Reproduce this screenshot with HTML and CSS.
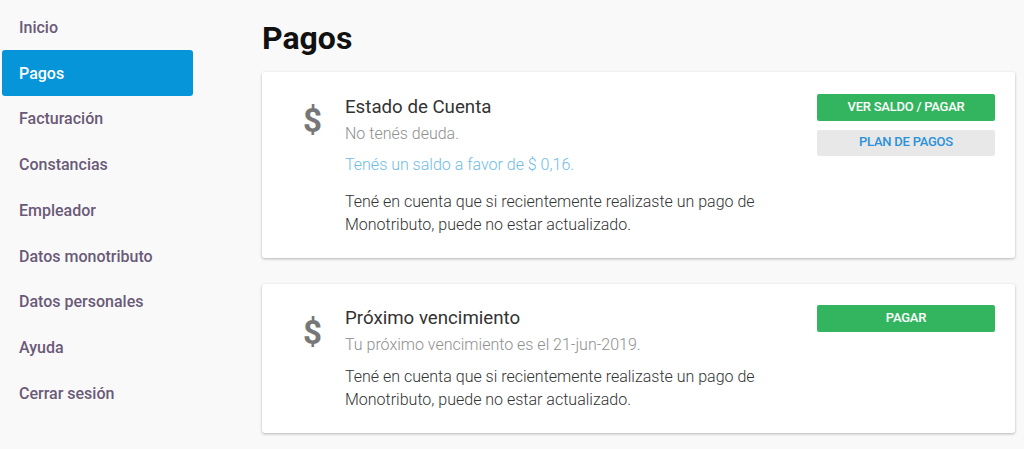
FILE: index.html
```html
<!DOCTYPE html>
<html lang="es">
<head>
<meta charset="utf-8">
<title>Pagos</title>
<link rel="stylesheet" href="styles.css">
</head>
<body>
<div class="layout">
  <nav class="sidebar">
    <a class="nav-item">Inicio</a>
    <a class="nav-item active">Pagos</a>
    <a class="nav-item">Facturación</a>
    <a class="nav-item">Constancias</a>
    <a class="nav-item">Empleador</a>
    <a class="nav-item">Datos monotributo</a>
    <a class="nav-item">Datos personales</a>
    <a class="nav-item">Ayuda</a>
    <a class="nav-item">Cerrar sesión</a>
  </nav>
  <main class="main">
    <h1 class="page-title">Pagos</h1>
    <section class="card card-first">
      <div class="icon">$</div>
      <div class="body">
        <h2 class="card-title">Estado de Cuenta</h2>
        <p class="muted">No tenés deuda.</p>
        <p class="credit">Tenés un saldo a favor de $ 0,16.</p>
        <p class="note note-first">Tené en cuenta que si recientemente realizaste un pago de Monotributo, puede no estar actualizado.</p>
      </div>
      <div class="actions actions-first">
        <a class="btn btn-green">VER SALDO / PAGAR</a>
        <a class="btn btn-grey">PLAN DE PAGOS</a>
      </div>
    </section>
    <section class="card">
      <div class="icon">$</div>
      <div class="body">
        <h2 class="card-title">Próximo vencimiento</h2>
        <p class="muted">Tu próximo vencimiento es el 21-jun-2019.</p>
        <p class="note note-second">Tené en cuenta que si recientemente realizaste un pago de Monotributo, puede no estar actualizado.</p>
      </div>
      <div class="actions">
        <a class="btn btn-green">PAGAR</a>
      </div>
    </section>
  </main>
</div>
</body>
</html>
```

FILE: styles.css
```css
* { box-sizing: border-box; }
html, body { margin: 0; height: 100%; overflow: hidden; }
body {
  background: #f9f9f9;
  font-family: Roboto, "Liberation Sans", sans-serif;
  color: #333;
}
.layout { display: flex; align-items: flex-start; }
.sidebar {
  width: 191px;
  margin-left: 2px;
  padding-top: 4.5px;
  flex: none;
  display: flex;
  flex-direction: column;
}
.nav-item {
  height: 45.75px;
  padding-left: 17px;
  display: flex;
  align-items: center;
  border-radius: 3px;
  font-size: 16px;
  font-weight: 500;
  color: #6a5a78;
}
.nav-item.active { background: #0795d9; color: #fff; }
.main { width: 753px; margin-left: 69px; }
.page-title {
  margin: 0;
  height: 72px;
  padding-top: 19px;
  font-size: 32px;
  line-height: 38px;
  font-weight: 700;
  color: #111;
}
.card {
  display: flex;
  background: #fff;
  border-radius: 3px;
  box-shadow: 0 1px 3px rgba(0,0,0,.28);
  height: 149px;
  padding: 21px 20px 0 0;
}
.card-first { height: 186px; margin-bottom: 26px; }
.icon {
  width: 83px;
  flex: none;
  padding-left: 41px;
  font-size: 33px;
  line-height: 42px;
  padding-top: 7px;
  font-weight: 700;
  color: #777;
}
.body { width: 440px; flex: none; font-size: 16px; }
.card-title {
  margin: 0;
  font-size: 18.7px;
  line-height: 26px;
  font-weight: 400;
  color: #333;
}
.card-first .card-title { margin-top: 1px; }
.muted { margin: 3px 0 0; line-height: 22px; font-weight: 300; color: #8f8f8f; }
.credit { margin: 9px 0 0; line-height: 22px; font-weight: 300; color: #6fbde6; }
.note { margin: 0; line-height: 23px; font-weight: 300; color: #333; }
.note-first { margin-top: 14px; }
.note-second { margin-top: 9px; }
.actions {
  margin-left: auto;
  width: 178px;
  display: flex;
  flex-direction: column;
  gap: 9px;
}
.actions-first { padding-top: 1px; }
.btn {
  height: 26.5px;
  padding-bottom: 2px;
  display: flex;
  align-items: center;
  justify-content: center;
  border-radius: 2px;
  font-size: 13px;
  letter-spacing: -0.25px;
  font-weight: 500;
}
.btn-green { background: #33b560; color: #fff; }
.btn-grey { background: #e8e8e8; color: #2a92d8; }
```
